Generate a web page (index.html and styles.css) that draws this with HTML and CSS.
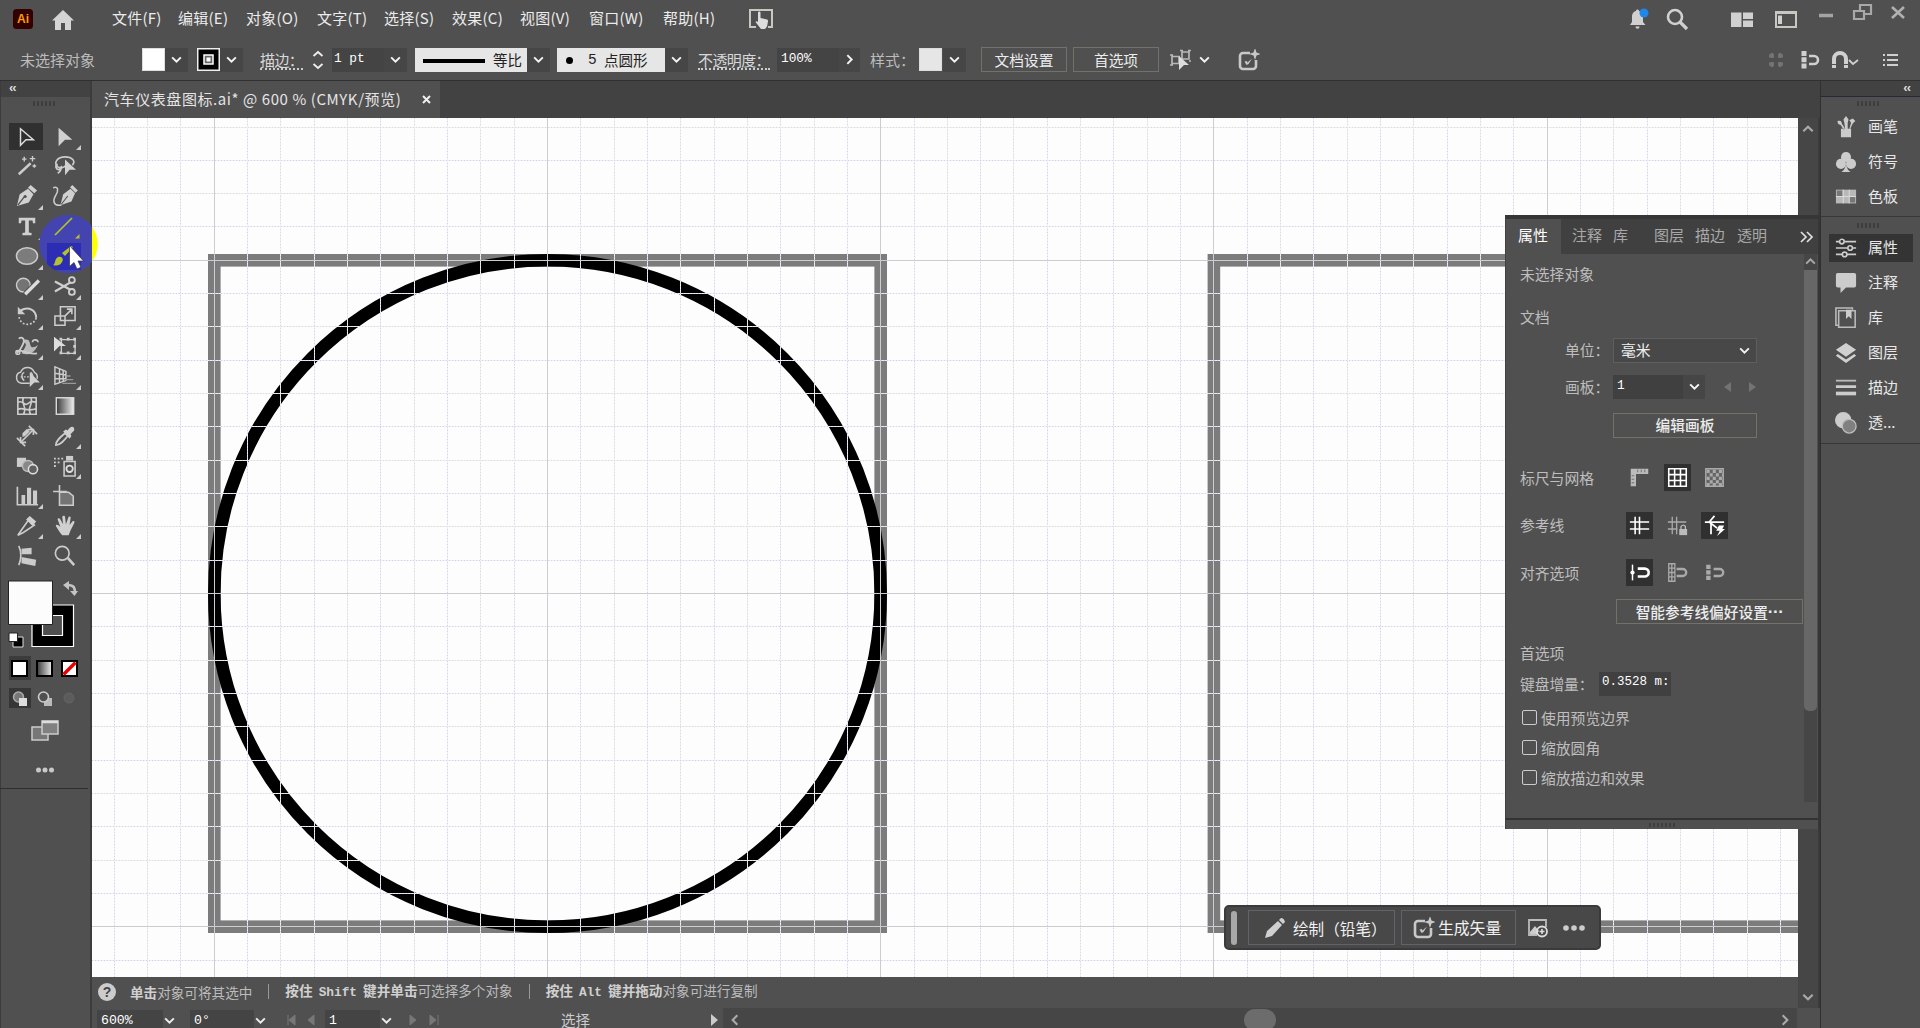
FILE: index.html
```html
<!DOCTYPE html>
<html lang="zh-CN">
<head>
<meta charset="utf-8">
<title>汽车仪表盘图标.ai</title>
<link rel="stylesheet" href="styles.css">
</head>
<body>
<svg class="defs" aria-hidden="true">
  <defs>
    <linearGradient id="lg"><stop offset="0" stop-color="#3a3a3a"/><stop offset="1" stop-color="#eee"/></linearGradient>
    <symbol id="chev" viewBox="0 0 12 8"><path d="M2 2l4 4 4-4" fill="none" stroke="currentColor" stroke-width="1.8"/></symbol>
    <symbol id="gen" viewBox="0 0 22 22"><path d="M12 4H5a3 3 0 0 0-3 3v10a3 3 0 0 0 3 3h10a3 3 0 0 0 3-3v-6" fill="none" stroke="currentColor" stroke-width="2.600"/><path d="M17 -1l1.500 4.500L23 5l-4.500 1.500L17 11l-1.500-4.500L11 5l4.500-1.500zM9.500 15.500l-3-3 2.500-.5zM6.500 12.500l3 1 4.500-4-3.500 5.500-2 1z" fill="currentColor"/></symbol>
  </defs>
</svg>

<header class="menubar">
  <svg class="logo" viewBox="0 0 20 20"><rect width="20" height="20" rx="3.500" fill="#330000"/><text x="10" y="14.300" text-anchor="middle" class="logo-text">Ai</text></svg>
  <svg class="home" viewBox="0 0 24 22"><path d="M12 1L1 11.500h3V21h6v-7h4v7h6v-9.500h3z" fill="#d4d4d4"/></svg>
  <nav class="menu"><span>文件(F)</span><span>编辑(E)</span><span>对象(O)</span><span>文字(T)</span><span>选择(S)</span><span>效果(C)</span><span>视图(V)</span><span>窗口(W)</span><span>帮助(H)</span></nav>
  <svg class="touch" viewBox="0 0 24 20"><path d="M7 18H1V1h22v17h-4" fill="none" stroke="#c8c8c0" stroke-width="2"/><path d="M9 3.500c0-1.500 2.500-1.500 2.500 0V9l6.500 1.500c1 .3 1 1.200 1 2l-1 5-2 2.500h-4l-5.500-7c1-1.200 2-.5 2.500.3z" fill="#ddd"/></svg>
  <div class="winicons">
    <svg width="22" height="24" viewBox="0 0 22 24"><path d="M3 18l2-3V10c0-4 2-5.500 4-6 0-2 3-2 3 0 2 .5 4 2 4 6v5l2.500 3zM8.500 19.500h4c0 3-4 3-4 0z" fill="#d0d0d0"/><circle cx="17" cy="6" r="4.500" fill="#2086e8"/></svg>
    <svg width="24" height="24" viewBox="0 0 24 24"><circle cx="10" cy="10" r="7" fill="none" stroke="#d0d0d0" stroke-width="2.600"/><path d="M15 15l7 7" stroke="#d0d0d0" stroke-width="3.200"/></svg>
    <svg width="24" height="18" viewBox="0 0 24 18"><path d="M1 2.500h10.500v14.500H1zM13 2.500h10v6.500H13zM13 10.500h10v6.500H13z" fill="#d0d0d0"/></svg>
    <svg width="24" height="18" viewBox="0 0 24 18"><path d="M2 2h20v15H2z" fill="none" stroke="#c8c8c0" stroke-width="2"/><path d="M2 3h20" stroke="#c8c8c0" stroke-width="2"/><path d="M4 5.500h4V14H4z" fill="#d0d0d0"/></svg>
    <svg class="wc" width="24" height="24" viewBox="0 0 24 24"><path d="M5 14.500h14" stroke="#a4a4a4" stroke-width="3.500"/></svg>
    <svg class="wc" width="24" height="24" viewBox="0 0 24 24"><path d="M10 9V4h11v9h-6M4 10h10v8H4z" fill="none" stroke="#a8a8a8" stroke-width="2.200"/></svg>
    <svg class="wc" width="24" height="24" viewBox="0 0 24 24"><path d="M6 6l12 11M18 6L6 17" stroke="#b0b0b0" stroke-width="2.600"/></svg>
  </div>
</header>

<section class="control">
  <div class="control-grid">
    <span class="dim">未选择对象</span>
    <i class="sw white"></i><i class="dd"><svg><use href="#chev"/></svg></i>
    <svg class="sw" viewBox="0 0 23 23"><rect x=".75" y=".75" width="21.500" height="21.500" stroke="#eee" stroke-width="1.500"/><rect x="7" y="7" width="9" height="9" fill="#666" stroke="#fff" stroke-width="1.500"/><rect x="9.500" y="9.500" width="4" height="4" fill="#fff"/></svg>
    <i class="dd"><svg><use href="#chev"/></svg></i>
    <span class="under">描边<s>：</s></span>
    <svg class="stepper" viewBox="0 0 16 24"><path d="M3.500 8L8 4l4.500 4M3.500 16L8 20l4.500-4" fill="none" stroke="#eee" stroke-width="1.800"/></svg>
    <span class="field mono">1 pt</span><i class="dd"><svg><use href="#chev"/></svg></i>
    <span class="profile"><i></i>等比</span><i class="dd"><svg><use href="#chev"/></svg></i>
    <span class="brushdef"><b></b><em>5</em>点圆形</span><i class="dd"><svg><use href="#chev"/></svg></i>
    <span class="under">不透明度<s>：</s></span>
    <span class="field mono opac">100%</span><i class="dd right"><svg><use href="#chev"/></svg></i>
    <span class="dim">样式<s>：</s></span>
    <i class="sw grey"></i><i class="dd"><svg><use href="#chev"/></svg></i>
    <span class="btn">文档设置</span><span class="btn">首选项</span>
    <svg width="24" height="24" viewBox="0 0 24 24"><path d="M4 8.500h7v7H4zM14 4h7v7h-7zM2 7h3M2 17h3M12 2.500h3M20 2.500h3M21 13h2" fill="none" stroke="#b8b8b8" stroke-width="1.700"/><path d="M11 8l10 9h-5l-5 5z" fill="#ddd"/></svg>
    <i class="dd plain"><svg><use href="#chev"/></svg></i>
    <svg class="gen"><use href="#gen"/></svg>
  </div>
  <div class="control-right">
    <svg width="24" height="24" viewBox="0 0 24 24"><path d="M8 5v5M16 5v5M8 14v5M16 14v5M5 8h5M14 8h5M5 16h5M14 16h5" stroke="#747474" stroke-width="3"/></svg>
    <svg width="24" height="24" viewBox="0 0 24 24"><path d="M7 3v18" stroke="#d0d0d0" stroke-width="5" stroke-dasharray="5 1.300"/><path d="M12 8h5a4 4 0 0 1 0 8h-5" fill="none" stroke="#d0d0d0" stroke-width="2.600"/></svg>
    <svg width="32" height="24" viewBox="0 0 32 24"><path d="M5 20v-9a6 6 0 0 1 12 0v9" fill="none" stroke="#d0d0d0" stroke-width="4"/><path d="M2 16.500h6M14 16.500h6" stroke="#505050"/><path d="M20 12l4 4 5-4" fill="none" stroke="#d0d0d0" stroke-width="1.800"/></svg>
    <svg width="18" height="24" viewBox="0 0 18 24"><path d="M1 7h2M1 12h2M1 17h2M5 7h11M5 12h11M5 17h11" stroke="#d0d0d0" stroke-width="2"/></svg>
  </div>
</section>

<main class="work">
  <aside class="tools">
    <div class="strip">‹‹</div>
    <div class="grip"></div>
    <div class="toolgrid">
      <div class="cell sel"><svg viewBox="0 0 24 24"><path d="M6 3l14 12h-8l-6 6z" fill="none" stroke="#ddd" stroke-width="1.600"/></svg></div>
      <div class="cell more"><svg viewBox="0 0 24 24"><path d="M5 2l15 13h-8l-7 7z" fill="#d0d0d0"/></svg></div>
      <div class="cell"><svg viewBox="0 0 24 24"><path d="M3 21L16 9" stroke="#ccc" stroke-width="2.600"/><path d="M9 2v5M6.500 4.500h5M18 1v6M15 4h6M20 10v4M18 12h4" stroke="#ccc" stroke-width="1.500"/></svg></div>
      <div class="cell"><svg viewBox="0 0 24 24"><path d="M13 11c-2 3-6 4-9 2C-1 8 4 2 12 2s12 5 8 9M4 10a3 3 0 1 0 4 2c0 5-2 7-4 8" fill="none" stroke="#ccc" stroke-width="1.800"/><path d="M12 5l12 11h-7l-5 6z" fill="#d0d0d0"/></svg></div>
      <div class="cell more"><svg viewBox="0 0 24 24"><path d="M1 23l3-13 9-6 6 6-5 9z" fill="#d0d0d0"/><path d="M2 22l7-9" stroke="#505050" stroke-width="1.400"/><circle cx="10" cy="12.500" r="1.700" fill="#505050"/><path d="M16 0l7 6-3 3-7-6z" fill="#d0d0d0"/></svg></div>
      <div class="cell"><svg viewBox="0 0 24 24"><path d="M7 22l3-12 8-6 5 5-4 9z" fill="#d0d0d0"/><path d="M8 21l7-9" stroke="#505050" stroke-width="1.200"/><path d="M20 0l6 6-2.500 2.500-6-6z" fill="#d0d0d0"/><path d="M-1 3c6-2 6 3 3 8s-4 12 6 11" fill="none" stroke="#ccc" stroke-width="1.700"/></svg></div>
      <div class="cell more"><svg viewBox="0 0 24 24"><path d="M3 3h18v6h-2.500l-.5-3h-4v13l3 .5V22H7v-2.500l3-.5V6H6l-.5 3H3z" fill="#d0d0d0"/></svg></div>
      <div class="cell"></div>
      <div class="cell more"><svg viewBox="0 0 24 24"><ellipse cx="12" cy="12" rx="11.500" ry="9" fill="#7c7c7c" stroke="#ccc" stroke-width="1.600"/></svg></div>
      <div class="cell"></div>
      <div class="cell more"><svg viewBox="0 0 24 24"><circle cx="8" cy="11" r="7.500" fill="#747474" stroke="#ccc" stroke-width="1.500"/><path d="M10 21L25 6" stroke="#505050" stroke-width="6"/><path d="M10 21L25 6" stroke="#ddd" stroke-width="3.600"/></svg></div>
      <div class="cell more"><svg viewBox="0 0 24 24"><path d="M1 7l17 9M1 18l17-10" stroke="#d0d0d0" stroke-width="2.400"/><circle cx="19.500" cy="5.500" r="3.200" fill="none" stroke="#d0d0d0" stroke-width="2"/><circle cx="19.500" cy="18.500" r="3.200" fill="none" stroke="#d0d0d0" stroke-width="2"/></svg></div>
      <div class="cell more"><svg viewBox="0 0 24 24"><path d="M5 6c9-5 17 0 17 8" fill="none" stroke="#ccc" stroke-width="2.200"/><path d="M22 14c-2 9-18 11-19-3" fill="none" stroke="#ccc" stroke-width="1.800" stroke-dasharray="2 2"/><path d="M2 2v8h8z" fill="#ccc"/></svg></div>
      <div class="cell more"><svg viewBox="0 0 24 24"><path d="M7 2h16v15H7zM1 12h11v10H1zM11 13l8-8M14 4.500h5.500V10" fill="none" stroke="#ccc" stroke-width="1.700"/></svg></div>
      <div class="cell more"><svg viewBox="0 0 24 24"><path d="M6 20c7 3 14 0 18-9-4 3-7 3-8 1-1-3-1-7-5-7-3 0-3 3-1 4s0 5-4 11z" fill="#bbb"/><path d="M3 4c4-3 7 1 5 5s-2 6-7 11M0 18c6-4 10 4 23 2M18 8c0-4 6-3 6 0" fill="none" stroke="#ccc" stroke-width="1.900"/><circle cx="2" cy="19" r="2.200" fill="none" stroke="#ccc" stroke-width="1.500"/></svg></div>
      <div class="cell more"><svg viewBox="0 0 24 24"><path d="M8 5h15v15H8z" fill="none" stroke="#ccc" stroke-width="1.500"/><path d="M6 3h3v3H6zM14 3h3v3h-3zM21 3h3v3h-3zM21 11h3v3h-3zM21 18h3v3h-3zM14 18h3v3h-3zM6 18h3v3H6z" fill="#ccc"/><path d="M0 2l13 10H6l-6 6z" fill="#ddd"/></svg></div>
      <div class="cell more"><svg viewBox="0 0 24 24"><path d="M15 20H6c-7-1-7-11-1-12 3-7 12-7 15 0 2 1 4 3 3 7M9 17c-4-3-3-8 0-9M16 8q3 3 2 6" fill="none" stroke="#ccc" stroke-width="1.600"/><path d="M5 13h12" stroke="#ccc" stroke-dasharray="2 1.500" stroke-width="1.500"/><path d="M15 8l11 11h-6l-5 5z" fill="#d0d0d0"/></svg></div>
      <div class="cell more"><svg viewBox="0 0 24 24"><path d="M1 2v19l12-4V7zM1 9l12 2M1 15h12M6 4v15M10 6v12" fill="none" stroke="#ccc" stroke-width="1.600"/><path d="M14 12h4M12 16h9M9 20h15" stroke="#999" stroke-width="1.500"/></svg></div>
      <div class="cell"><svg viewBox="0 0 24 24"><path d="M2 3h20v18H2zM2 8c5-3 7 4 10 2s4-4 10-2M2 16c5-4 9 3 20-1M8 3c-3 6 5 11 0 18M16 3c4 6-5 11 0 18" fill="none" stroke="#ccc" stroke-width="1.800"/></svg></div>
      <div class="cell"><svg viewBox="0 0 24 24"><rect x="2.500" y="3" width="19" height="18" fill="url(#lg)" stroke="#ddd" stroke-width="1.500"/></svg></div>
      <div class="cell"><svg viewBox="0 0 24 24"><path d="M1 14l9 9M14 1l9 9M6 18L18 6" stroke="#ccc" stroke-width="1.800"/><path d="M5 13v6h6M13 5h6v6" fill="none" stroke="#ccc" stroke-width="1.800"/><path d="M7 9l5-5 3 3-5 5-3 1z" fill="#ccc"/></svg></div>
      <div class="cell more"><svg viewBox="0 0 24 24"><path d="M2 22c0-5 5-9 10-13l3 3C11 17 7 22 2 22z" fill="none" stroke="#ccc" stroke-width="1.800"/><path d="M10 7l3-2 2 1c3-6 8-5 7 0l-4 4 1 2-2 3z" fill="#d0d0d0"/></svg></div>
      <div class="cell"><svg viewBox="0 0 24 24"><path d="M1 3h10v10H1z" fill="#ccc"/><circle cx="13" cy="12" r="6" fill="#888" stroke="#bbb" stroke-width="1.500"/><circle cx="18.500" cy="15.500" r="5" fill="#606060" stroke="#ddd" stroke-width="1.700"/></svg></div>
      <div class="cell more"><svg viewBox="0 0 24 24"><path d="M11 7h12v16H11zM14 6V2h6v4" fill="none" stroke="#ccc" stroke-width="1.700"/><path d="M14 1h6v5h-6z" fill="#ccc"/><circle cx="17" cy="15" r="3.500" fill="none" stroke="#ddd" stroke-width="2"/><path d="M0 4h10M0 8h8M0 12h4" stroke="#ccc" stroke-width="2" stroke-dasharray="2 2"/></svg></div>
      <div class="cell more"><svg viewBox="0 0 24 24"><path d="M1.500 2v19.500H24" fill="none" stroke="#ccc" stroke-width="1.800"/><path d="M6 11h4v10H6zM12 3h4.500v18H12zM18.500 6H23v15h-4.500z" fill="#ccc"/></svg></div>
      <div class="cell"><svg viewBox="0 0 24 24"><path d="M-1 7h15M6 0v8" stroke="#ccc" stroke-width="1.700"/><path d="M6 8h10l5 4v10H6z" fill="#747474" stroke="#ccc" stroke-width="1.700"/></svg></div>
      <div class="cell more"><svg viewBox="0 0 24 24"><path d="M2 22L14 5l6 6L8 19z" fill="none" stroke="#ccc" stroke-width="1.800"/><path d="M15 1l7 6-4 5-7-7z" fill="#d0d0d0"/></svg></div>
      <div class="cell more"><svg viewBox="0 0 24 24"><path d="M9 22c-3-3-5-7-7-10 0-2 2-2 5 1L4 5c0-2 2-2 3 0l3 5-1-8c1-2 3-1 3 0l1 8 3-8c1-1 3 0 2 2l-1 7 3-4c2-1 3 0 2 2l-4 8-2 5z" fill="#d0d0d0"/></svg></div>
      <div class="cell"><svg viewBox="0 0 24 24"><path d="M3 1c3 6 3 15 0 21" fill="none" stroke="#ccc" stroke-width="1.800"/><path d="M6 4l11-1v7H6zM6 13l16 3-1 7-15-3z" fill="#ccc"/></svg></div>
      <div class="cell"><svg viewBox="0 0 24 24"><circle cx="9" cy="9" r="7.500" fill="none" stroke="#ccc" stroke-width="1.800"/><path d="M15 14l7 8" stroke="#ccc" stroke-width="2.800"/></svg></div>
    </div>
    <svg class="swatches" width="91" height="218" viewBox="0 571 91 218">
      <path d="M32 605h41.500v41.500H32z" fill="#000" stroke="#fff" stroke-width="1.200"/><path d="M42.500 615.500h20v20h-20z" fill="#505050" stroke="#fff" stroke-width="1.200"/>
      <path d="M8.500 581h44v43.500h-44z" fill="#fcfcfc" stroke="#222"/>
      <path d="M68 585c6 0 7 3 7 8" fill="none" stroke="#c4c4c4" stroke-width="2.600"/><path d="M63 585l6-4v9zM70 591h8l-3.500 5z" fill="#c4c4c4"/>
      <path d="M13 637h10v10H13z" stroke="#ddd"/><path d="M9 633h8.500v8.500H9z" fill="#fff" stroke="#222"/>
      <path d="M9 656h22v24H9z" fill="#3c3c3c"/>
      <path d="M12 661h15v15H12z" fill="#fff" stroke="#000" stroke-width="2"/><path d="M37 661h15v15H37z" fill="url(#lg)" stroke="#000" stroke-width="2"/><path d="M62 661h15v15H62z" fill="#fff" stroke="#000" stroke-width="2"/><path d="M63.500 674.500l12-12" stroke="#e80000" stroke-width="3.400"/>
      <path d="M9 688h22v20H9z" fill="#363636"/><circle cx="18.500" cy="697" r="5" fill="#777" stroke="#aaa" stroke-width="1.500"/><path d="M19 698h8v8h-8z" fill="#ddd"/>
      <path d="M44 698h8v8h-8z" fill="#bbb"/><circle cx="43.500" cy="697" r="5" fill="#505050" stroke="#ccc" stroke-width="1.600"/><circle cx="69" cy="698" r="5" fill="#5c5c5c" stroke="#646464"/>
      <path d="M32 727h16v13H32z" fill="#777" stroke="#ccc" stroke-width="1.500"/><path d="M42 721h16v13H42z" fill="#808080" stroke="#ccc" stroke-width="1.500"/><path d="M42 722h16" stroke="#ddd" stroke-width="2.500"/>
      <circle cx="38.500" cy="770" r="2.500" fill="#c8c8c8"/><circle cx="45" cy="770" r="2.500" fill="#c8c8c8"/><circle cx="51.500" cy="770" r="2.500" fill="#c8c8c8"/>
      <path d="M0 788.500h88" stroke="#2e2e2e"/>
    </svg>
  </aside>

  <section class="doc">
    <div class="tabs"><div class="tab"><span>汽车仪表盘图标.ai* @ 600 % (CMYK/预览)</span><svg width="9" height="9" viewBox="0 0 9 9"><path d="M1 1l7 7M8 1L1 8" stroke="#f0f0f0" stroke-width="2"/></svg></div></div>
    <div class="viewport">
      <svg id="art" class="art" viewBox="92 118 1706 859">
        <rect x="92" y="118" width="1706" height="859" fill="#fdfdfd"/>
        <rect x="214.300" y="260.300" width="666.400" height="666.400" fill="none" stroke="#7c7c7c" stroke-width="12.600"/>
        <rect x="1213.900" y="260.300" width="666.400" height="666.400" fill="none" stroke="#7c7c7c" stroke-width="12.600"/>
        <circle cx="547.500" cy="593.500" r="333.200" fill="none" stroke="#000" stroke-width="12.600"/>
        <g id="grid"></g>
      </svg>
      <div class="vscroll"><svg><use href="#chev"/></svg><svg><use href="#chev"/></svg></div>
    </div>
    <div class="tips"><i class="q">?</i><span><b>单击</b>对象可将其选中</span><u></u><span class="t2"><b>按住 <tt>Shift</tt> 键并单击</b>可选择多个对象</span><u></u><span class="t3"><b>按住 <tt>Alt</tt> 键并拖动</b>对象可进行复制</span></div>
    <div class="status">
      <span class="sf">600%</span><svg class="c"><use href="#chev"/></svg>
      <span class="sf">0°</span><svg class="c"><use href="#chev"/></svg>
      <svg width="40" height="12" viewBox="0 0 40 12"><path d="M5 1v10M12 1v10L6 6zM31 1v10l-6-5z" fill="#777" stroke="#777"/></svg>
      <span class="sf">1</span><svg class="c"><use href="#chev"/></svg>
      <svg width="40" height="12" viewBox="0 0 40 12"><path d="M6 1v10l6-5zM26 1v10l6-5zM34 1v10" fill="#777" stroke="#777"/></svg>
      <span class="mode">选择</span>
      <svg width="10" height="12" viewBox="0 0 10 12"><path d="M1 0v12l7-6z" fill="#ccc"/></svg>
      <div class="hscroll"><svg><use href="#chev"/></svg><i></i><svg><use href="#chev"/></svg></div>
    </div>
  </section>

  <aside class="dock">
    <div class="strip">‹‹</div>
    <div class="grip"></div>
    <div class="group g1">
      <div><svg viewBox="0 0 24 26"><path d="M6 15h12v10H6zM2 6c0 5 3 4 4 5l3 5 2-1-4-6c0-2-1-4-5-3zM10 8l-1-4 3-4 3 4-1 4v7h-3zM16 15l2-7-2-3 4-2 3 3-3 3-3 6z" fill="#ccc"/></svg>画笔</div>
      <div><svg viewBox="0 0 24 24"><circle cx="12" cy="6.500" r="5.500" fill="#ccc"/><circle cx="6.500" cy="14" r="5.500" fill="#ccc"/><circle cx="17.500" cy="14" r="5.500" fill="#ccc"/><path d="M12 10c0 6-1 10-5 13h10c-4-3-5-7-5-13z" fill="#ccc"/></svg>符号</div>
      <div><svg viewBox="0 0 24 24"><path d="M1 4h22v15H1z" fill="#b8b8b8"/><path d="M2 5h6v6H2zM16 12h6v6h-6z" fill="#777"/><path d="M1 11.500h22M9 4v15M15.500 4v15" stroke="#ddd"/></svg>色板</div>
    </div>
    <div class="grip second"></div>
    <div class="group">
      <div class="on"><svg viewBox="0 0 24 24"><path d="M1 5h4M10 5h13M1 12h13M19 12h4M1 19h7M13 19h10" stroke="#ccc" stroke-width="1.800"/><g fill="none" stroke="#ccc" stroke-width="1.800"><circle cx="7.500" cy="5" r="2.500"/><circle cx="16.500" cy="12" r="2.500"/><circle cx="10.500" cy="19" r="2.500"/></g></svg>属性</div>
      <div><svg viewBox="0 0 24 24"><path d="M3 1h18q2 0 2 2v12q0 2-2 2h-9l-6 6v-6H3q-2 0-2-2V3q0-2 2-2z" fill="#ccc"/></svg>注释</div>
      <div><svg viewBox="0 0 24 24"><path d="M4 20H1V1h18v2M4 4h18v18H4z" fill="none" stroke="#bbb" stroke-width="1.700"/><path d="M12 3h6v10l-3-3-3 3z" fill="#ccc"/></svg>库</div>
      <div><svg viewBox="0 0 24 24"><path d="M12 1l11 7.500L12 16 1 8.500zM3 13l9 6 9-6 2 2-11 8L1 15z" fill="#d0d0d0"/></svg>图层</div>
      <div><svg viewBox="0 0 24 24"><path d="M1 4h22" stroke="#bbb" stroke-width="2"/><path d="M1 10.500h22" stroke="#ccc" stroke-width="3"/><path d="M1 18h22" stroke="#ccc" stroke-width="4"/></svg>描边</div>
      <div><svg viewBox="0 0 24 24"><circle cx="9" cy="9" r="9" fill="#ccc"/><circle cx="15.500" cy="15.500" r="7.500" fill="#808080" stroke="#bbb" stroke-width="1.500"/></svg>透...</div>
    </div>
  </aside>
</main>

<section class="panel">
  <div class="ptabs"><span class="act">属性</span><span>注释</span><span>库</span><span>图层</span><span>描边</span><span>透明</span><svg width="14" height="12" viewBox="0 0 14 12"><path d="M1 1l5 5-5 5M7 1l5 5-5 5" fill="none" stroke="#e0e0e0" stroke-width="1.700"/></svg></div>
  <div class="pbody">
    <div class="prows">
      <div class="r h42">未选择对象</div>
      <div class="r h44">文档</div>
      <div class="r h22 unit"><span class="lab">单位<s>：</s></span><span class="select">毫米<svg><use href="#chev"/></svg></span></div>
      <div class="r h50"><span class="lab">画板<s>：</s></span><span class="pin mono">1</span><i class="dd"><svg><use href="#chev"/></svg></i><svg class="nav" width="34" height="12" viewBox="0 0 34 12"><path d="M8 1v10L1 6zM26 1v10l7-5z" fill="#737373"/></svg></div>
      <div class="r h24"><span class="btn edit">编辑画板</span></div>
      <div class="r h48 first"><span class="pl">标尺与网格</span>
        <i class="ib"><svg viewBox="0 0 24 24"><path d="M2 2h20v6H8v14H2z" fill="#bbb"/><path d="M3 10h3M3 14h3M3 18h3M10 3v3M14 3v3M18 3v3" stroke="#666"/></svg></i>
        <i class="ib on"><svg viewBox="0 0 24 24"><path d="M2 2h20v20H2zM8.700 2v20M15.400 2v20M2 8.700h20M2 15.400h20" fill="none" stroke="#fff" stroke-width="1.800"/></svg></i>
        <i class="ib"><svg viewBox="0 0 24 24"><path d="M2 2h20v20H2z" fill="#646464" stroke="#aaa" stroke-width="1.600"/><path d="M3 5h18M3 13h18M3 20h18" stroke="#aaa" stroke-width="3.500" stroke-dasharray="3.500 3.500"/><path d="M6.500 9h15M6.500 17h15" stroke="#aaa" stroke-width="3.500" stroke-dasharray="3.500 3.500"/></svg></i></div>
      <div class="r h48"><span class="pl">参考线</span>
        <i class="ib on"><svg viewBox="0 0 24 24"><path d="M7 2v20M12 2v20M1 8h22M1 16h22" stroke="#fff" stroke-width="1.800"/></svg></i>
        <i class="ib"><svg viewBox="0 0 24 24"><path d="M6 2v20M11 2v20M1 8h21M1 16h11" stroke="#aaa" stroke-width="1.500"/><path d="M14 16h9v7h-9z" fill="#bbb"/><path d="M16 16v-3q3-3 5 0v3" fill="none" stroke="#bbb" stroke-width="1.500"/></svg></i>
        <i class="ib on"><svg viewBox="0 0 24 24"><path d="M1 8h22M8 8v14M12 1L6 8l9 7" fill="none" stroke="#fff" stroke-width="2"/><path d="M17 12h6l-2 4h3l-9 8 3-6h-4z" fill="#fff"/></svg></i></div>
      <div class="r h48"><span class="pl">对齐选项</span>
        <i class="ib on"><svg viewBox="0 0 24 24"><path d="M4 3v18" stroke="#fff" stroke-width="1.700"/><circle cx="4" cy="12" r="2.400" fill="#fff"/><path d="M10 7.500h8a4.500 4.500 0 0 1 0 9h-8" fill="none" stroke="#fff" stroke-width="3"/></svg></i>
        <i class="ib"><svg viewBox="0 0 24 24"><path d="M2 2h7v20H2zM2 7h7M2 12h7M2 17h7M5.500 2v20" fill="none" stroke="#aaa" stroke-width="1.500"/><path d="M11 8h7a4 4 0 0 1 0 8h-7" fill="none" stroke="#aaa" stroke-width="2.600"/></svg></i>
        <i class="ib"><svg viewBox="0 0 24 24"><path d="M5 3v18" stroke="#aaa" stroke-width="5" stroke-dasharray="5 1.300"/><path d="M11 8h7a4 4 0 0 1 0 8h-7" fill="none" stroke="#aaa" stroke-width="2.600"/></svg></i></div>
      <div class="r h32"><span class="btn smart">智能参考线偏好设置<tt>···</tt></span></div>
      <div class="r h34">首选项</div>
      <div class="r h30 key"><span>键盘增量<s>：</s></span><span class="pin mono inc">0.3528 m:</span></div>
      <label class="r h30 ck"><i></i>使用预览边界</label>
      <label class="r h30 ck"><i></i>缩放圆角</label>
      <label class="r h30 ck"><i></i>缩放描边和效果</label>
    </div>
    <div class="pscroll"><svg><use href="#chev"/></svg><i></i></div>
  </div>
  <div class="pfoot"></div>
</section>

<div class="taskbar">
  <i class="handle"></i>
  <span class="tb t-a"><svg width="22" height="22" viewBox="0 0 22 22"><path d="M1 21l2-7L14 4l4 4L8 19zM15 3l2-2q3 0 4 4l-2 2z" fill="#d0d0d0"/></svg>绘制（铅笔）</span>
  <span class="tb t-b"><svg width="22" height="22"><use href="#gen"/></svg>生成矢量</span>
  <svg width="22" height="20" viewBox="0 0 22 20"><path d="M10 17H2V2h17v7" fill="none" stroke="#bbb" stroke-width="1.800"/><path d="M3 14l5-6 4 5-2 3H3z" fill="#ccc"/><circle cx="15" cy="13.500" r="5" fill="none" stroke="#ddd" stroke-width="1.800"/><path d="M15 11v5M12.500 13.500h5" stroke="#ddd" stroke-width="1.600"/></svg>
  <svg width="24" height="8" viewBox="0 0 24 8"><g fill="#ccc"><circle cx="4" cy="4" r="2.800"/><circle cx="12" cy="4" r="2.800"/><circle cx="20" cy="4" r="2.800"/></g></svg>
</div>

<svg class="click" width="66" height="66" viewBox="36 211 66 66">
  <clipPath id="l"><path d="M36 211h56v66H36z"/></clipPath><clipPath id="r"><path d="M92 211h10v66H92z"/></clipPath><clipPath id="cc"><circle cx="68.500" cy="244" r="29.200"/></clipPath>
  <circle cx="68.500" cy="244" r="29.200" fill="#4444b0" clip-path="url(#l)"/><circle cx="68.500" cy="244" r="29.200" fill="#ffff00" clip-path="url(#r)"/>
  <path d="M47 243h34v27H47z" fill="#2c2cb4" clip-path="url(#cc)"/>
  <path d="M55 235l17-17" stroke="#b4c428" stroke-width="1.700"/><path d="M75 238.500h4.500V234z" fill="#b4c428"/>
  <path d="M73 247l-8 9-3-3 9-7zM53 265c3-1 1-6 5-8 4-1 6 2 4 5-2 4-6 4-9 3z" fill="#b4c428"/>
  <path d="M69.500 245.500v21l4.500-4 3 6.500 4-1.700-3-6.300h5.500z" fill="#fff" stroke="#333" stroke-width=".7"/>
</svg>
<script src="script.js"></script>
</body>
</html>
```
FILE: styles.css
```css
* { box-sizing: border-box; }
body { margin: 0; width: 1920px; height: 1028px; overflow: hidden; display: flex; flex-direction: column; background: #505050; color: #e4e4e4; font: 15px/20px "Noto Sans CJK SC", sans-serif; position: relative; white-space: nowrap; }
svg { display: block; flex: none; overflow: visible; }
i, em { font-style: normal; }
s { font-family: "Noto Sans CJK TC", sans-serif; text-decoration: none; }
.defs { position: absolute; width: 0; height: 0; }
.mono { font-family: "Liberation Mono", "Noto Sans CJK SC", monospace; font-size: 12.800px; }

.menubar { height: 38px; flex: none; display: flex; align-items: center; padding-left: 13px; }
.logo { width: 20px; height: 20px; }
.logo-text { font: bold 12px "Liberation Sans", sans-serif; fill: #ff9a00; }
.home { width: 24px; height: 22px; margin: 2px 0 0 18px; }
.menu { display: grid; grid-template-columns: 66px 68px 71px 67px 68px 68px 69px 74px 86px; margin: -3px 0 0 37px; color: #ececec; letter-spacing: .25px; }
.touch { width: 24px; height: 20px; }
.winicons { margin-left: auto; width: 293px; display: grid; grid-template-columns: 38px 65px 44px 40px 36px 36px 34px; align-items: center; }
.wc { margin-bottom: 12px; }

.control { height: 43px; flex: none; display: flex; justify-content: space-between; align-items: center; padding: 1px 20px 0 20px; border-bottom: 1px solid #303030; }
.control-grid { display: grid; align-items: center; grid-template-columns: 122px 23px 32px 23px 40px 50px 22px 52px 31px 112px 30px 108px 33px 79px 62px 31px 49px 24px 38px 92px 95px 26px 44px 24px; }
.dim { color: #bcbcbc; }
.sw { width: 23px; height: 23px; border: 1px solid #ddd; }
svg.sw { border: 0; }
.white { background: #fff; }
.grey { background: #e6e6e6; }
.dd { width: 23px; height: 24px; background: #464646; display: flex; align-items: center; justify-content: center; color: #f4f4f4; }
.dd svg { width: 13px; height: 9px; }
.dd.plain { background: none; width: 20px; }
.dd.right svg { transform: rotate(-90deg); }
.dd.right { width: 21px; }
.under { justify-self: start; height: 20px; line-height: 20px; border-bottom: 2px dotted #ccc; color: #d8d8d8; letter-spacing: -.6px; }
.stepper { width: 16px; height: 24px; }
.field { background: #444; height: 24px; line-height: 21px; padding-left: 3px; color: #fff; }
.control .field:not(.opac) { padding-left: 2px; }
.opac { padding-left: 4px; }
.profile, .brushdef { height: 24px; background: #e6e6e6; color: #222; display: flex; align-items: center; font-size: 14.500px; }
.profile i { width: 62px; height: 4px; background: #000; margin: 3px 8px 0 8px; }
.brushdef b { width: 7px; height: 7px; border-radius: 4px; background: #000; margin: 2px 15px 0 9px; }
.brushdef em { width: 16px; font: 14.500px "Liberation Mono", monospace; }
.btn { width: 86px; height: 25px; border: 1px solid #727268; display: flex; align-items: center; justify-content: center; color: #ececec; font-size: 14.700px; }
.gen { width: 22px; height: 22px; color: #c8c8c8; }
.control-right { display: grid; grid-template-columns: 33px 32px 53px 18px; }

.work { flex: 1; min-height: 0; display: flex; }
.strip { height: 16px; background: #424242; color: #ddd; font: bold 13px/13px "Liberation Sans", sans-serif; padding-left: 8px; letter-spacing: -1px; }
.grip { width: 24px; height: 5px; margin: 4px 0 0 32px; background: repeating-linear-gradient(90deg, #3e3e3e 0 2px, #505050 2px 4px); }
.tools { width: 92px; border-right: 2px solid #3c3c3c; border-left: 1px solid #3c3c3c; }
.toolgrid { display: grid; grid-template-columns: 38px 38px; grid-auto-rows: 29.950px; margin: 16px 0 0 7px; height: 449px; }
.cell { display: grid; place-items: center; position: relative; height: 29px; margin: 0 1.500px; }
.cell svg { width: 22px; height: 22px; }
.cell.sel { background: #303030; height: 27px; margin: 1px 3px 0 .5px; }
.more::after { content: ""; position: absolute; right: 2px; bottom: 1px; border-left: 5px solid transparent; border-bottom: 5px solid #ccc; }
.swatches { margin-left: -1px; }

.doc { width: 1728px; display: flex; flex-direction: column; }
.tabs { height: 37px; background: #424242; }
.tab { width: 348px; height: 37px; background: #505050; padding: 0 9px 1px 12px; display: flex; align-items: center; justify-content: space-between; letter-spacing: .58px; }
.viewport { height: 859px; display: flex; }
.art { width: 1706px; height: 859px; overflow: hidden; }
.minor { stroke: #eeeef3; stroke-width: 1; shape-rendering: crispEdges; }
.tint-a { stroke: #d2d2f8; stroke-dasharray: 1 2; shape-rendering: crispEdges; }
.tint-b { stroke: #dcdccc; stroke-dasharray: 1 2; shape-rendering: crispEdges; }
.major { stroke: #ccccd2; shape-rendering: crispEdges; }
.vscroll { width: 22px; background: #464646; border-right: 2px solid #3a3a3a; display: flex; flex-direction: column; align-items: center; justify-content: space-between; height: 890px; padding: 6px 0; color: #aaa; }
.vscroll svg { width: 14px; height: 10px; }
.vscroll svg:first-child { transform: rotate(180deg); }
.tips { height: 31px; width: 1706px; display: flex; align-items: center; padding: 0 0 2px 6px; color: #bcbcbc; font-size: 13.600px; }
.tips b { color: #d0d0d0; }
.tips tt { font-family: "Liberation Mono", monospace; font-size: 12.800px; margin: 0 3px; }
.tips u { width: 1px; height: 15px; background: #999; margin: 0 16px; }
.q { width: 18px; height: 18px; border-radius: 50%; background: #ccc; color: #444; font: bold 14px/18px "Liberation Sans", sans-serif; text-align: center; margin-right: 14px; }
.status { flex: 1; display: grid; grid-template-columns: 66px 27px 64px 29px 42px 55px 24px 157px 149px 12px 1px; padding-left: 5px; align-items: center; grid-template-rows: 24px; height: 20px; }
.status .c { width: 13px; height: 9px; color: #eee; }
.sf { background: #444; height: 20px; padding-left: 4px; font: 13.200px/22px "Liberation Mono", monospace; color: #fff; }
.mode { color: #ccc; font-size: 14.500px; }
.hscroll { width: 1074px; height: 24px; margin-left: 1px; background: #464646; display: flex; align-items: center; justify-content: space-between; padding: 0 5px; color: #aaa; }
.hscroll svg { width: 14px; height: 10px; transform: rotate(-90deg); }
.hscroll svg:first-child { transform: rotate(90deg); }
.hscroll i { width: 32px; height: 22px; border-radius: 11px; background: #6c6c6c; }

.dock { width: 100px; border-left: 1px solid #303030; }
.dock .strip { text-align: right; padding-right: 10px; border-bottom: 1px solid #282838; }
.dock .grip { margin: 4px 0 0 36px; }
.group { padding-left: 8px; }
.group div { height: 28px; margin-bottom: 7px; width: 84px; display: flex; align-items: center; gap: 11px; padding: 0 0 2px 6px; color: #e8e8e8; }
.group svg { width: 22px; height: 22px; margin-top: 2px; }
.g1 { padding-top: 7px; border-bottom: 1px solid #383838; height: 111px; }
.group .on { background: #343434; }
.dock .second { margin-top: 6px; margin-bottom: 6px; }
.second + .group { height: 210px; border-bottom: 1px solid #383838; }

.panel { position: absolute; z-index: 2; left: 1505px; top: 215px; width: 315px; height: 614px; background: #505050; border-top: 4px solid #363636; border-right: 2px solid #363636; border-left: 1px solid #404040; display: flex; flex-direction: column; color: #bebebe; font-size: 14.800px; }
.ptabs { height: 35px; flex: none; background: #404040; display: grid; grid-template-columns: 66px 41px 41px 41px 42px 63px 14px; align-items: center; color: #a8a8a8; font-size: 15px; line-height: 32px; }
.ptabs > span { padding-bottom: 3px; }
.ptabs .act { background: #505050; color: #fff; height: 35px; line-height: 32px; width: 55px; padding-left: 12px; }
.pbody { flex: 1; display: flex; min-height: 0; }
.prows { width: 298px; padding-left: 14px; margin-top: -1px; }
.r { display: flex; align-items: center; }
.h22 { height: 22px; }
.h24 { height: 26px; }
.h30 { height: 30px; }
.h32 { height: 30px; }
.h34 { height: 34px; }
.h42 { height: 42px; }
.h44 { height: 44px; }
.h48 { height: 47.500px; }
.h50 { height: 51px; }
.unit { height: 22px; }
.lab { width: 93px; padding-left: 45px; flex: none; }
.select { width: 144px; height: 25px; background: #484848; border: 1px solid #5e5e5e; display: flex; align-items: center; justify-content: space-between; padding: 0 5px 0 7px; color: #f0f0f0; }
.select svg { width: 13px; height: 9px; }
.pin { width: 70px; height: 24px; background: #404040; color: #fff; line-height: 21px; padding-left: 4px; font-size: 12.800px; overflow: hidden; }
.pin + .dd { width: 22px; }
.nav { margin-left: 18px; }
.edit { width: 144px; margin-left: 93px; font-weight: 500; }
.first { margin-top: 16px; }
.pl { width: 106px; }
.ib { width: 27px; height: 27px; margin-right: 10.500px; display: grid; place-items: center; }
.ib svg { width: 21px; height: 21px; }
.ib.on { background: #303030; }
.smart { width: 187px; margin-left: 96px; font-weight: 500; }
.smart tt { font: bold 17px/20px "Liberation Sans", sans-serif; letter-spacing: -.5px; }
.h32 + .h34 { margin-top: 9px; }
.key { height: 32px; margin-top: -2px; }
.key span:first-child { width: 79px; letter-spacing: -.1px; }
.inc { width: 72px; padding-left: 3px; font-size: 12.500px; }
.key + .ck { margin-top: 3px; }
.ck i { width: 15px; height: 15px; border: 1.500px solid #ccc; border-radius: 2px; margin: 0 4px 0 2px; }
.pscroll { width: 13px; margin-bottom: 16px; background: #464646; color: #aaa; display: flex; flex-direction: column; align-items: center; }
.pscroll svg { width: 13px; height: 9px; transform: rotate(180deg); margin: 3px 0 4px; }
.pscroll i { width: 13px; height: 441px; background: #676767; border-radius: 0 0 5px 5px; }
.pfoot { height: 11px; border-top: 2px solid #333; background: repeating-linear-gradient(90deg, #3e3e3e 0 2px, #505050 2px 4px) 143px 3px / 28px 4px no-repeat; }

.taskbar { position: absolute; left: 1224px; top: 905px; width: 377px; height: 45px; background: #484848; border: 2px solid #3a3a3a; border-radius: 5px; display: flex; align-items: center; padding-left: 5px; color: #f2f2f2; font-size: 15.800px; }
.handle { width: 6px; height: 34px; border-radius: 3px; background: #a8a8a8; margin-right: 11px; }
.tb { height: 35px; border: 1px solid #62626a; display: flex; align-items: center; }
.tb svg { color: #c8c8c8; }
.t-a { width: 147px; padding-left: 15px; gap: 7px; margin-right: 6px; font-size: 15.600px; }
.t-b { width: 115px; padding-left: 11px; gap: 3px; margin-right: 11px; }
.taskbar > svg:last-child { margin-left: 13px; }
.click { position: absolute; left: 36px; top: 211px; }
```
FILE: script.js
```js
const grid = document.getElementById('grid');
const step = 33.32;

function line(cls, x1, y1, x2, y2) {
  const el = document.createElementNS('http://www.w3.org/2000/svg', 'line');
  el.setAttribute('class', cls);
  el.setAttribute('x1', x1);
  el.setAttribute('y1', y1);
  el.setAttribute('x2', x2);
  el.setAttribute('y2', y2);
  grid.appendChild(el);
}

function rule(vertical, i, origin) {
  const p = Math.floor(origin + i * step) + 0.5;
  const ends = vertical ? [p, 118, p, 977] : [92, p, 1798, p];
  if (i % 10 === 0) return () => line('major', ...ends);
  line('minor', ...ends);
  line(i % 2 ? 'tint-a' : 'tint-b', ...ends);
  return null;
}

const majors = [];
for (let i = -3; i < 48; i++) majors.push(rule(true, i, 214.3));
for (let i = -4; i < 22; i++) majors.push(rule(false, i, 260.3));
majors.filter(Boolean).forEach(draw => draw());
```
